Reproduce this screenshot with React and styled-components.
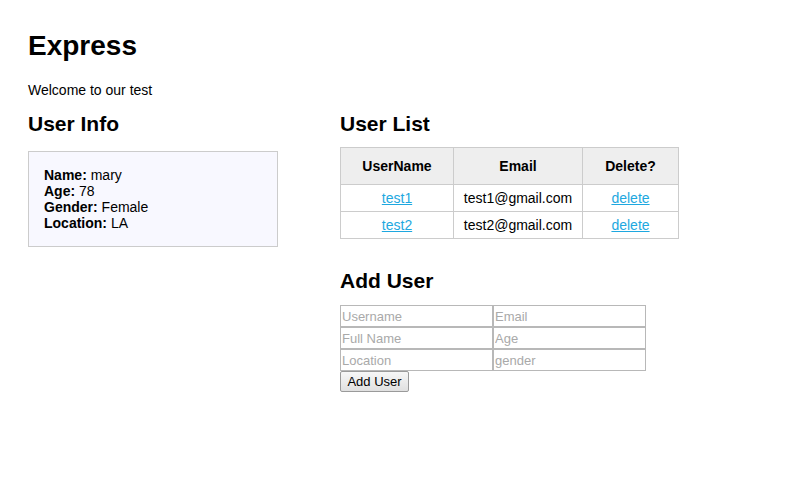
import React from 'react';
import styled, { createGlobalStyle } from 'styled-components';

const GlobalStyle = createGlobalStyle`
  html, body {
    margin: 0;
    padding: 0;
    background: #fff;
  }
  body {
    font-family: "Liberation Sans", Arial, Helvetica, sans-serif;
    font-size: 14px;
    color: #000;
  }
`;

const users = [
  { username: 'test1', email: 'test1@gmail.com' },
  { username: 'test2', email: 'test2@gmail.com' },
];

const info = [
  ['Name:', 'mary'],
  ['Age:', '78'],
  ['Gender:', 'Female'],
  ['Location:', 'LA'],
];

const App = () => {
  return (
    <Page>
      <GlobalStyle />
      <Title>Express</Title>
      <Welcome>Welcome to our test</Welcome>
      <Columns>
        <LeftColumn>
          <SectionTitle>User Info</SectionTitle>
          <InfoBox>
            {info.map(([label, value]) => (
              <InfoLine key={label}>
                <strong>{label}</strong> {value}
              </InfoLine>
            ))}
          </InfoBox>
        </LeftColumn>
        <RightColumn>
          <SectionTitle>User List</SectionTitle>
          <UserTable>
            <thead>
              <tr>
                <Th $width={113}>UserName</Th>
                <Th $width={129}>Email</Th>
                <Th $width={96}>Delete?</Th>
              </tr>
            </thead>
            <tbody>
              {users.map((u) => (
                <tr key={u.username}>
                  <Td><Link href="#">{u.username}</Link></Td>
                  <Td>{u.email}</Td>
                  <Td><Link href="#">delete</Link></Td>
                </tr>
              ))}
            </tbody>
          </UserTable>
          <SectionTitle $spaced>Add User</SectionTitle>
          <Form>
            <InputRow>
              <Input placeholder="Username" />
              <Input placeholder="Email" />
            </InputRow>
            <InputRow>
              <Input placeholder="Full Name" />
              <Input placeholder="Age" />
            </InputRow>
            <InputRow>
              <Input placeholder="Location" />
              <Input placeholder="gender" />
            </InputRow>
            <Button type="button">Add User</Button>
          </Form>
        </RightColumn>
      </Columns>
    </Page>
  );
};

const Page = styled.div`
  padding: 30px 28px;
`;

const Title = styled.h1`
  margin: 0;
  font-size: 28px;
  line-height: 32px;
  font-weight: bold;
`;

const Welcome = styled.p`
  margin: 20px 0 0;
  line-height: 16px;
`;

const Columns = styled.div`
  display: flex;
  align-items: flex-start;
  gap: 62px;
  margin-top: 14px;
`;

const LeftColumn = styled.div`
  width: 250px;
  flex-shrink: 0;
`;

const RightColumn = styled.div`
  display: flex;
  flex-direction: column;
  align-items: flex-start;
`;

const SectionTitle = styled.h2`
  margin: ${(p) => (p.$spaced ? '30px 0 0' : '0')};
  font-size: 21px;
  line-height: 24px;
  font-weight: bold;
`;

const InfoBox = styled.div`
  margin-top: 15px;
  padding: 15px;
  border: 1px solid #cccccc;
  background: #f8f8ff;
`;

const InfoLine = styled.div`
  line-height: 16px;
`;

const UserTable = styled.table`
  margin-top: 11px;
  border-collapse: collapse;
  table-layout: fixed;
`;

const Th = styled.th`
  width: ${(p) => p.$width}px;
  box-sizing: border-box;
  padding: 10px 0;
  line-height: 16px;
  background: #eeeeee;
  border: 1px solid #cccccc;
  font-weight: bold;
  text-align: center;
`;

const Td = styled.td`
  padding: 5px 0;
  line-height: 16px;
  border: 1px solid #cccccc;
  text-align: center;
`;

const Link = styled.a`
  color: #1ea8e0;
`;

const Form = styled.form`
  margin-top: 12px;
  display: flex;
  flex-direction: column;
`;

const InputRow = styled.div`
  display: flex;
`;

const Input = styled.input`
  box-sizing: border-box;
  width: 153px;
  height: 22px;
  margin: 0;
  padding: 1px 1px;
  border: 1px solid #a9a9a9;
  outline: 1px solid #b8b8b8;
  outline-offset: -1px;
  font-family: "Liberation Sans", Arial, sans-serif;
  font-size: 13px;
  color: #000;
  background: #fff;
  &::placeholder {
    color: #a9a9a9;
  }
`;

const Button = styled.button`
  align-self: flex-start;
  box-sizing: border-box;
  width: 69px;
  height: 21px;
  margin: 0;
  padding: 0 6px;
  border: 1px solid #9a9a9a;
  border-radius: 2px;
  background: linear-gradient(#f7f7f7, #e0e0e0);
  font-family: "Liberation Sans", Arial, sans-serif;
  font-size: 13px;
  color: #000;
`;

export default App;
